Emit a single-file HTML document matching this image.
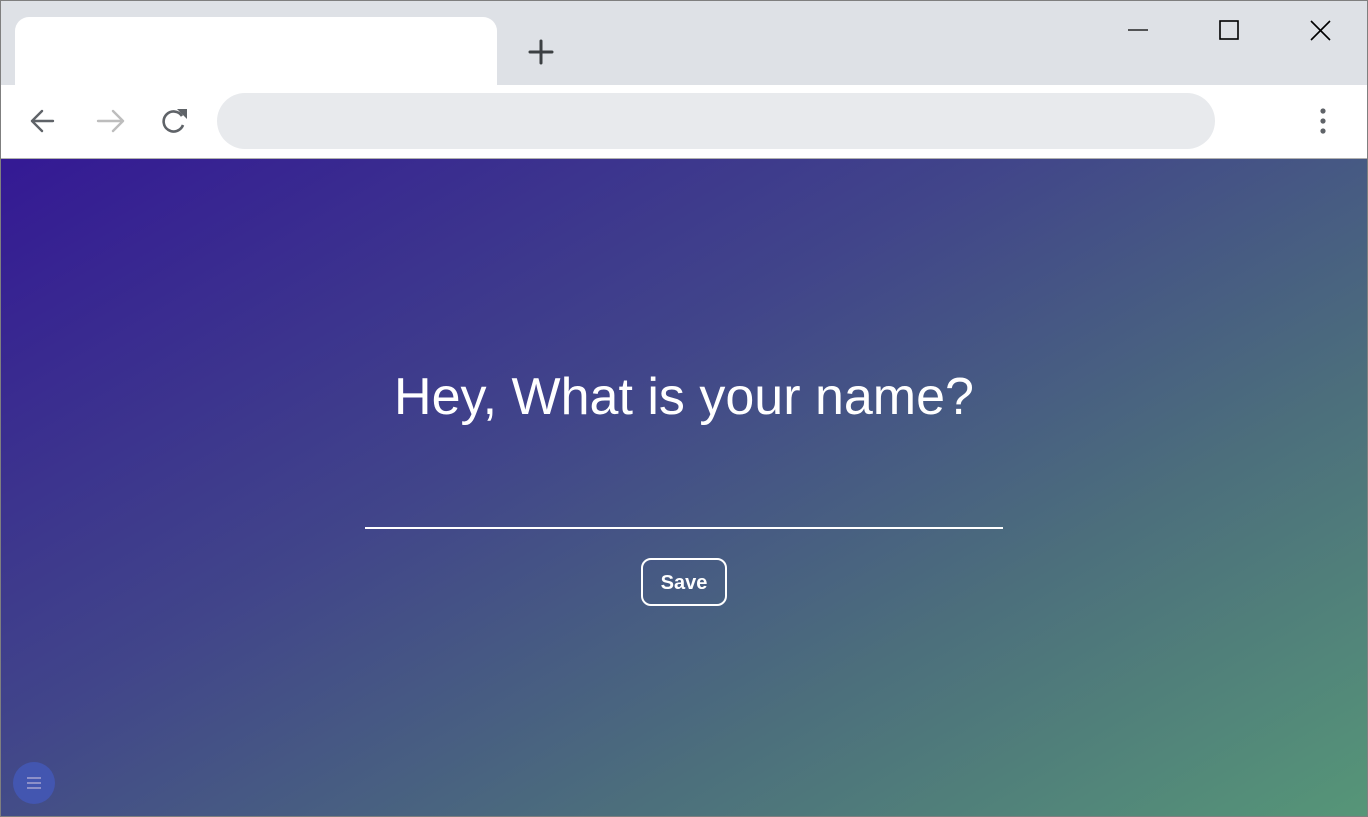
<!DOCTYPE html>
<html><head><style>
*{margin:0;padding:0;box-sizing:border-box}
body{width:1368px;height:817px;overflow:hidden;font-family:"Liberation Sans",sans-serif;background:#fff;position:relative}
.frame{position:absolute;left:0;top:0;width:1368px;height:817px;border:1px solid #7f7f7f;z-index:5;pointer-events:none}
.tabbar{position:absolute;left:0;top:0;width:1368px;height:85px;background:#dee1e6}
.tab{position:absolute;left:15px;top:17px;width:482px;height:70px;background:#fff;border-radius:14px 14px 0 0}
.toolbar{position:absolute;left:0;top:85px;width:1368px;height:74px;background:#fff;border-bottom:1px solid #b0b0b0}
.url{position:absolute;left:217px;top:8px;width:998px;height:56px;background:#e8eaed;border-radius:28px}
.content{position:absolute;left:0;top:159px;width:1368px;height:658px;background:linear-gradient(150deg,#341994 0%,#41458a 40%,#4c6f7c 70%,#569678 100%)}
h1{position:absolute;left:0;width:1368px;top:208px;text-align:center;color:#fff;font-weight:400;font-size:52px}
.line{position:absolute;left:365px;top:368px;width:638px;height:2px;background:#fff}
.btn{position:absolute;left:641px;top:399px;width:86px;height:48px;border:2px solid #fff;border-radius:10px;color:#fff;font-size:20px;font-weight:bold;text-align:center;line-height:46px}
.fab{position:absolute;left:13px;top:603px;width:42px;height:42px;border-radius:50%;background:#4356b0}
.fab i{position:absolute;left:14px;width:14px;height:2px;background:#8d90c8}
</style></head><body><div class="frame"></div>
<div class="tabbar"><div class="tab"></div>
<svg style="position:absolute;left:528px;top:39px" width="26" height="26"><path d="M13 2v22M2 13h22" stroke="#3c4043" stroke-width="3" stroke-linecap="round"/></svg>
<svg style="position:absolute;left:1120px;top:14px" width="240" height="34"><path d="M8 16h20" stroke="#000" stroke-width="1.3"/><rect x="100" y="7" width="18" height="18" fill="none" stroke="#000" stroke-width="1.6"/><path d="M191 7l19 19M210 7l-19 19" stroke="#000" stroke-width="1.6"/></svg>
</div>
<div class="toolbar">
<svg style="position:absolute;left:28px;top:20px" width="170" height="32"><path d="M4 16h21M4 16l10-10M4 16l10 10" stroke="#5f6368" stroke-width="2.4" fill="none" stroke-linecap="round"/><path d="M70 16h25M95 16l-10-10M95 16l-10 10" stroke="#bdbdbd" stroke-width="2.4" fill="none" stroke-linecap="round"/><path d="M155 20a10 10 0 1 1 -1-9" stroke="#5f6368" stroke-width="2.6" fill="none"/><path d="M149 4h10v10z" fill="#5f6368"/></svg>
<div class="url"></div>
<svg style="position:absolute;left:1317px;top:22px" width="12" height="30"><circle cx="6" cy="4" r="2.6" fill="#5f6368"/><circle cx="6" cy="14" r="2.6" fill="#5f6368"/><circle cx="6" cy="24" r="2.6" fill="#5f6368"/></svg>
</div>
<div class="content">
<h1>Hey, What is your name?</h1>
<div class="line"></div>
<div class="btn">Save</div>
<div class="fab"><i style="top:15px"></i><i style="top:20px"></i><i style="top:25px"></i></div>
</div>
</body></html>
